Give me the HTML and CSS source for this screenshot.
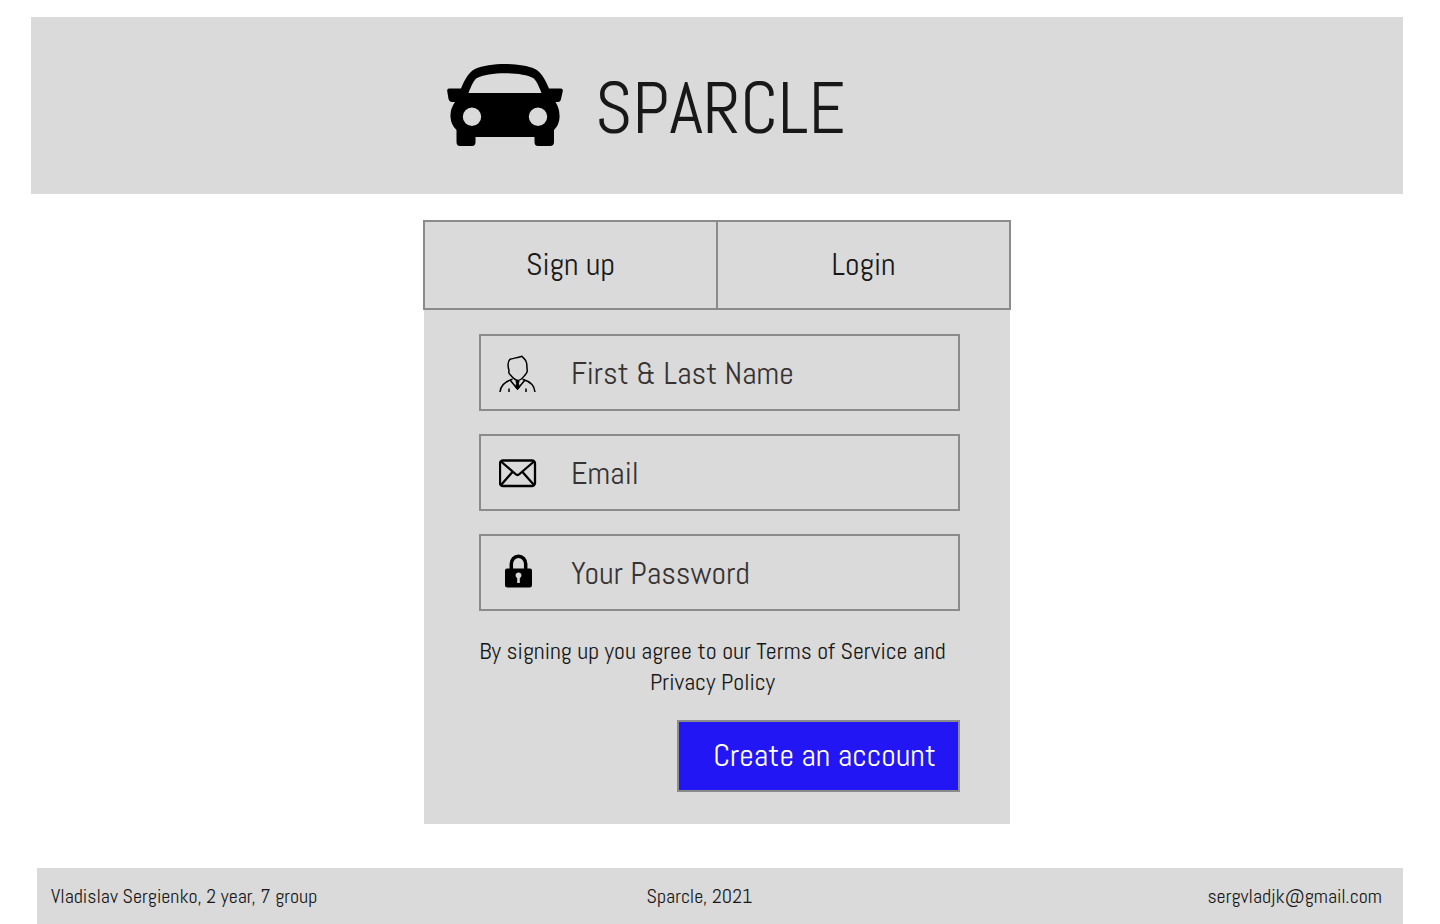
FILE: index.html
```html
<!DOCTYPE html>
<html lang="en">
<head>
<meta charset="utf-8">
<meta name="viewport" content="width=device-width, initial-scale=1">
<title>Sparcle</title>
<link rel="stylesheet" href="styles.css">
</head>
<body>
<header class="header">
  <div class="brand">
    <svg class="brand-icon" viewBox="0 0 116 82" aria-hidden="true">
      <path fill-rule="evenodd" d="M14 24.500C18 15 22 8 28 5C43-1.600 73-1.600 88 5C94 8 98 15 102 24.500H114Q116 24.500 115.800 27L114 35Q113.500 38 111 38H108.500Q113 45 112.500 54Q112 61 107 66V78Q107 82 103 82H91Q87.500 82 87.500 78V73H28.500V78Q28.500 82 25 82H13Q9.500 82 9.500 78V66Q4 61 3.500 53Q3 45 8 38H5Q2.500 38 1.500 35L.2 27Q0 24.500 2 24.500ZM21.500 29H94.500C91 20 89 16 86 14C75 7.500 41 7.500 30 14C27 16 25 20 21.500 29ZM25 43.500A9.200 9.200 0 1 0 25 61.900A9.200 9.200 0 1 0 25 43.500ZM91 43.500A9.200 9.200 0 1 0 91 61.900A9.200 9.200 0 1 0 91 43.500Z"/>
    </svg>
    <h1 class="brand-name">SPARCLE</h1>
  </div>
</header>

<main class="main">
  <nav class="tabs" aria-label="Account">
    <button class="tab" type="button">Sign up</button>
    <button class="tab" type="button">Login</button>
  </nav>
  <form class="card">
    <label class="field">
      <svg class="field-icon" viewBox="0.500 -1.500 38 38" fill="none" stroke="#000" aria-hidden="true">
        <path stroke-width="1.500" d="M10.500 15C9 10 9.800 5.500 11.500 3.800C14 2.800 18 2.500 23.500 .8C25 3 28 4 28.200 8L28.700 15C29 17 27.500 18 27 19C24.500 22 22.500 25 19.500 25S14 22 11.500 19C10 18 10 17 10.500 15ZM1.500 36.500C2 31 6 26 14 23.800M36.500 36.500C36 31 32 26 24 23.800"/>
        <path stroke-width="1.500" d="M11.500 24.500L19 33.500L26.500 24.500M10.500 33V36.500M27.500 33V36.500"/>
        <path fill="#000" d="M17.500 25.500H20.500L20 28L21 32L19 34L17 32L18 28Z"/>
      </svg>
      <input class="input" type="text" placeholder="First &amp; Last Name" aria-label="First &amp; Last Name">
    </label>
    <label class="field">
      <svg class="field-icon" viewBox="0.500 -0.500 38 38" fill="none" stroke="#000" stroke-width="2.300" aria-hidden="true">
        <rect x="1.500" y="6" width="35" height="25.500" rx="3"/>
        <path d="M2.500 7L17 19.500Q19 21.500 21 19.500L35.500 7M2.500 30.500L14 17.500M35.500 30.500L24 17.500"/>
      </svg>
      <input class="input" type="email" placeholder="Email" aria-label="Email">
    </label>
    <label class="field">
      <svg class="field-icon" viewBox="0 1 38 38" aria-hidden="true">
        <path fill="none" stroke="#000" stroke-width="3.500" d="M12.300 17V11A7.200 7.700 0 0 1 26.700 11V17"/>
        <path fill-rule="evenodd" d="M8 15.500H31Q33 15.500 33 17.500V32Q33 34.500 30.500 34.500H8.500Q6 34.500 6 32V17.500Q6 15.500 8 15.500ZM18.200 25V30H20.800V25A2.900 2.900 0 1 0 18.200 25Z"/>
      </svg>
      <input class="input" type="password" placeholder="Your Password" aria-label="Your Password">
    </label>
    <p class="terms">By signing up you agree to our Terms of Service and Privacy Policy</p>
    <button class="submit" type="submit">Create an account</button>
  </form>
</main>

<footer class="footer">
  <span>Vladislav Sergienko, 2 year, 7 group</span>
  <span class="copyright">Sparcle, 2021</span>
  <a class="mail" href="mailto:sergvladjk@gmail.com">sergvladjk@gmail.com</a>
</footer>
</body>
</html>
```
FILE: styles.css
```css
* { box-sizing: border-box; }

body {
  display: flex;
  flex-direction: column;
  min-height: 100vh;
  margin: 0;
  padding: 17px 37px 0 31px;
  background: #fff;
  color: #181818;
  font-family: Abel, "Roboto Condensed", "Open Sans Condensed", "Liberation Sans Narrow", Roboto, sans-serif;
  font-weight: 400;
}

button, input { font: inherit; color: inherit; }

.header { padding: 46px 0 41px; background: #dadada; }

.brand {
  display: flex;
  align-items: flex-start;
  gap: 32px;
  max-width: 588px;
  margin: 0 auto;
  padding-left: 24px;
}

.brand-icon { width: 116px; height: 84px; }

.brand-name { margin: 0; font-size: 72px; font-weight: 400; line-height: 90px; }

.main { width: 100%; max-width: 588px; margin: 26px auto 44px; }

.tabs { display: flex; border: 2px solid #8b8b8b; background: #dadada; }

.tab { flex: 1; padding: 0 0 2px; border: 0; background: none; font-size: 32px; line-height: 84px; }
.tab + .tab { border-left: 2px solid #8b8b8b; }

.card {
  display: flex;
  flex-direction: column;
  gap: 23px;
  margin: 0 1px;
  padding: 24px 50px 32px 55px;
  background: #dadada;
}

.field {
  display: flex;
  align-items: center;
  gap: 34px;
  padding: 0 18px;
  border: 2px solid #8b8b8b;
}

.field-icon { flex: none; width: 38px; height: 38px; }

.input {
  flex: 1;
  min-width: 0;
  height: 73px;
  padding: 0;
  border: 0;
  outline: 0;
  background: none;
  font-size: 32px;
}
.input::placeholder { color: #373333; opacity: 1; }

.terms { margin: 1px 14px 0 0; font-size: 24px; line-height: 31px; text-align: center; }

.submit {
  align-self: flex-end;
  padding: 0 22px 2px 34px;
  border: 2px solid #8b8b8b;
  background: #2316f5;
  color: #fff;
  font-size: 32px;
  line-height: 66px;
}

.footer {
  display: grid;
  grid-template-columns: 1fr auto 1fr;
  margin: auto 0 0 6px;
  padding: 0 21px 0 14px;
  background: #dadada;
  font-size: 20px;
  line-height: 56px;
}

.copyright { padding-right: 34px; }

.mail { justify-self: end; color: inherit; text-decoration: none; }
```
